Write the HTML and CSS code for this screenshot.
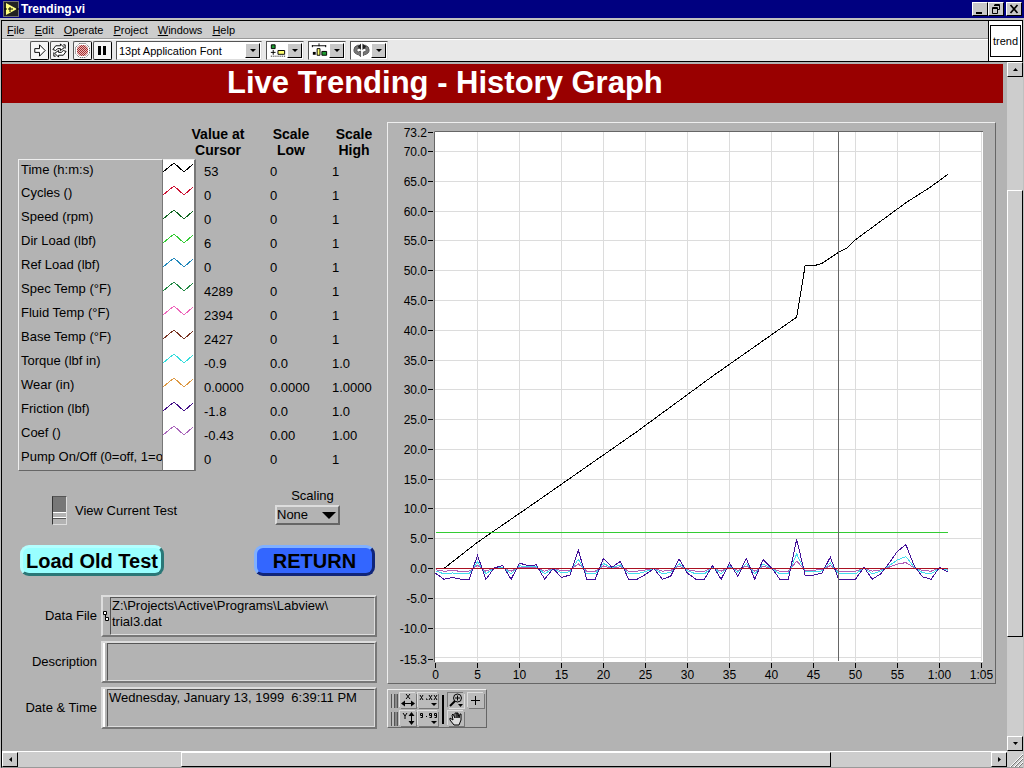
FILE: index.html
```html
<!DOCTYPE html>
<html lang="en">
<head>
<meta charset="utf-8">
<title>Trending.vi</title>
<link rel="stylesheet" href="styles.css">
</head>
<body>
<div class="window">
  <header class="titlebar">
    <svg class="app-icon" width="16" height="16" viewBox="0 0 16 16" aria-hidden="true">
      <rect width="16" height="16" fill="#222"/><rect x=".5" y=".5" width="15" height="15" fill="none" stroke="#c0c0c0" stroke-dasharray="1 1"/>
      <path d="M3 2L14 8L3 14Z" fill="#ffff80"/><path d="M1 8h3M5 8h5M7 6v5M13 8h3" stroke="#000" fill="none"/>
    </svg>
    <h1 class="caption">Trending.vi</h1>
    <div class="win-buttons">
      <button class="win-btn" aria-label="Minimize"><svg width="14" height="12" viewBox="0 0 14 12"><path d="M3 9h6v2H3z"/></svg></button>
      <button class="win-btn" aria-label="Restore"><svg width="14" height="12" viewBox="0 0 14 12"><path d="M5.500 1.500h5v5h-2M5 2.500h6M3.500 4.500h5v6h-5zM3 5.500h6" fill="none" stroke="#000"/></svg></button>
      <button class="win-btn win-close" aria-label="Close"><svg width="14" height="12" viewBox="0 0 14 12"><path d="M3.500 2l7 8M10.500 2l-7 8" fill="none" stroke="#000" stroke-width="1.700"/></svg></button>
    </div>
  </header>

  <div class="chrome">
    <div class="bars">
      <nav class="menubar">
        <a href="#"><u>F</u>ile</a><a href="#"><u>E</u>dit</a><a href="#"><u>O</u>perate</a><a href="#"><u>P</u>roject</a><a href="#"><u>W</u>indows</a><a href="#"><u>H</u>elp</a>
      </nav>
      <div class="toolbar">
        <div class="pair">
          <button class="tool" aria-label="Run"><svg width="17" height="17" viewBox="0 0 18 18"><path d="M4 7h5V3l6 6-6 6v-4H4z" fill="#fff" stroke="#000"/></svg></button>
          <button class="tool" aria-label="Run continuously"><svg width="17" height="17" viewBox="0 0 18 18"><path d="M2 8l3-4h5V2l4 4-4 3V7H7L5 9zM16 10l-3 4H8v2l-4-4 4-3v2h3l2-2z" fill="#fff" stroke="#000"/><path d="M13 3h2v4M5 15H3v-4" fill="none" stroke="#000"/></svg></button>
        </div>
        <div class="pair">
          <button class="tool" aria-label="Abort"><svg width="17" height="17" viewBox="0 0 17 17"><defs><pattern id="dots" width="2" height="2" patternUnits="userSpaceOnUse"><rect width="2" height="2" fill="#e7b9b9"/><path d="M0 0h1v1H0zM1 1h1v1H1z" fill="#a52c2c"/></pattern></defs><path d="M5.500 1.500h6l4 4v6l-4 4h-6l-4-4v-6z" fill="#fff" stroke="#555" stroke-dasharray="1 1"/><path d="M6 3h5l3 3v5l-3 3H6l-3-3V6z" fill="url(#dots)"/></svg></button>
          <button class="tool" aria-label="Pause"><svg width="17" height="17" viewBox="0 0 17 17"><path d="M4 4h3v9H4zM9 4h3v9H9z"/></svg></button>
        </div>
        <div class="combo combo-font"><select aria-label="Font"><option>13pt Application Font</option></select><span class="drop"></span></div>
        <button class="combo combo-icon" aria-label="Align objects"><svg width="20" height="15" viewBox="0 0 20 15"><path d="M3.500 1.500h4v4h-4z" fill="#1c9c30" stroke="#000"/><path d="M10.500 7.500h7v4h-7z" fill="#ffff70" stroke="#000"/><path d="M3 9.500h5M5.500 7v5" stroke="#000"/><path d="M3 13.500h16" stroke="#000" stroke-dasharray="1 1"/></svg><span class="drop"></span></button>
        <button class="combo combo-icon" aria-label="Distribute objects"><svg width="20" height="15" viewBox="0 0 20 15"><path d="M2 2.500h15M2.500 2v2M9.500 0v3M16.500 2v2" stroke="#000"/><path d="M3 9h3v3H3z"/><path d="M7.500 5.500h3v7h-3z" fill="#ffff70" stroke="#000"/><path d="M12.500 8.500h5v4h-5z" fill="#1c9c30" stroke="#000"/></svg><span class="drop"></span></button>
        <button class="combo combo-icon" aria-label="Reorder objects"><svg width="20" height="15" viewBox="0 0 20 15"><path d="M8 2H6Q2 3 2 7q0 4 5 5l2 2v-6l-2 1Q5 9 5 7q0-2 3-2zM12 2h2q4 1 4 5 0 4-5 5l-1 1v-4q3 0 3-2t-3-2z" fill="#777" stroke="#555"/><path d="M9.500 0v7L6 3.500zM11 0v7l4-3.500z" fill="#222"/></svg><span class="drop"></span></button>
      </div>
    </div>
    <div class="vi-icon"><span>trend</span></div>
  </div>

  <div class="viewport">
    <main class="panel">
      <h2 class="banner">Live Trending - History Graph</h2>
      <div class="content">
        <section class="left">
          <table class="legend">
            <colgroup><col class="c-name"><col class="c-plot"><col class="c-value"><col class="c-low"><col class="c-high"></colgroup>
            <thead><tr><td colspan="2"></td><th class="h-value" scope="col"><span>Value at<br>Cursor</span></th><th scope="col">Scale<br>Low</th><th scope="col">Scale<br>High</th></tr></thead>
            <tbody id="legend-rows"></tbody>
          </table>

          <div class="options">
            <label class="switch-label"><input type="checkbox" class="switch">View Current Test</label>
            <div class="scaling">
              <label for="scaling">Scaling</label>
              <div class="ring"><select id="scaling"><option>None</option></select></div>
            </div>
          </div>

          <div class="actions">
            <button class="action load">Load Old Test</button>
            <button class="action return">RETURN</button>
          </div>

          <div class="fields">
            <label for="data-file">Data File</label>
            <div class="field"><span class="path-handle"><svg width="7" height="12" viewBox="0 0 7 12"><path d="M.5 1.500h3v3h-3zM2.500 7.500h3v3h-3zM2.500 4v3.500" fill="#fff" stroke="#000"/></svg></span><textarea id="data-file" readonly>Z:\Projects\Active\Programs\Labview\
trial3.dat</textarea></div>
            <label for="description">Description</label>
            <div class="field"><span class="bar-handle"></span><textarea id="description"></textarea></div>
            <label for="date-time">Date &amp; Time</label>
            <div class="field"><span class="bar-handle"></span><textarea id="date-time" readonly>Wednesday, January 13, 1999  6:39:11 PM</textarea></div>
          </div>
        </section>

        <section class="right">
          <div class="graph"><svg id="graph" viewBox="388 123 607 560" role="img" aria-label="History graph"></svg></div>
          <div class="palette">
            <div class="pal-scale">
              <span class="lock"></span>
              <button class="pal" aria-label="Autoscale X"><svg width="16" height="15" viewBox="0 0 16 15"><path d="M6 1l4 5M10 1L6 6M2 10.500h12" stroke="#000" fill="none"/><path d="M1 10.500l4-3v6zM15 10.500l-4-3v6z"/></svg></button>
              <button class="pal" aria-label="X format"><svg width="20" height="15" viewBox="0 0 20 15"><path d="M2 2l3 5M5 2L2 7M11 2l3 5M14 2l-3 5M16 2l3 5M19 2l-3 5M8 6h1v1" stroke="#000" fill="none"/><path d="M13 10h6l-3 3z"/></svg></button>
              <span class="lock"></span>
              <button class="pal" aria-label="Autoscale Y"><svg width="16" height="15" viewBox="0 0 16 15"><path d="M3 2l2 3 2-3M5 5v3M11.500 3v9" stroke="#000" fill="none"/><path d="M11.500 1l3 4h-6zM11.500 14l3-4h-6z"/></svg></button>
              <button class="pal" aria-label="Y format"><svg width="20" height="15" viewBox="0 0 20 15"><path d="M4.500 4.500h-2v-2h2v4h-2M13.500 4.500h-2v-2h2v4h-2M18.500 4.500h-2v-2h2v4h-2M8 5.500h1" stroke="#000" fill="none"/><path d="M13 10h6l-3 3z"/></svg></button>
            </div>
            <span class="pal-divider"></span>
            <div class="pal-tools">
              <button class="pal down" aria-label="Zoom"><svg width="16" height="15" viewBox="0 0 16 15"><circle cx="9.500" cy="5" r="4" fill="none" stroke="#000"/><path d="M7 5h5M9.500 2.500v5" stroke="#000"/><path d="M7 8l-5 5" stroke="#000" stroke-width="2"/><path d="M10 11h5l-2.500 3z"/></svg></button>
              <button class="pal" aria-label="Cursor"><svg width="16" height="15" viewBox="0 0 16 15"><path d="M3 7.500h9M7.500 3v9" stroke="#000"/></svg></button>
              <button class="pal" aria-label="Pan"><svg width="16" height="15" viewBox="0 0 16 15"><path d="M6 14L2 9V7l3 2-1-5 1-1 2 4V2h2v5V2h1l1 5 1-4h1v6l-2 5z" fill="#ddd" stroke="#000"/></svg></button>
            </div>
          </div>
        </section>
      </div>
    </main>
    <div class="vscroll">
      <button class="sb-btn" aria-label="Scroll up"><svg width="5" height="3" viewBox="0 0 5 3"><path d="M0 3h5L2.500 0z"/></svg></button>
      <div class="track"><div class="v-thumb"></div></div>
      <button class="sb-btn" aria-label="Scroll down"><svg width="5" height="3" viewBox="0 0 5 3"><path d="M0 0h5L2.500 3z"/></svg></button>
    </div>
    <div class="hscroll">
      <button class="sb-btn" aria-label="Scroll left"><svg width="3" height="5" viewBox="0 0 3 5"><path d="M3 0v5L0 2.500z"/></svg></button>
      <div class="track"><div class="h-thumb"></div></div>
      <button class="sb-btn" aria-label="Scroll right"><svg width="3" height="5" viewBox="0 0 3 5"><path d="M0 0v5l3-2.500z"/></svg></button>
    </div>
    <div class="grip"><svg width="14" height="14" viewBox="0 0 14 14"><path d="M1 14L14 1M5 14l9-9M9 14l5-5" stroke="#fff"/><path d="M2 14L14 2M6 14l8-8M10 14l4-4" stroke="#777"/></svg></div>
  </div>
</div>
<script src="trend.js"></script>
</body>
</html>
```

FILE: styles.css
```css
* { box-sizing: border-box; }
body { margin: 0; font: 13px/16px "Liberation Sans", Arial, sans-serif; color: #000; background: #c0c0c0; }
button, select, textarea { font: inherit; color: inherit; border-radius: 0; margin: 0; }
button { padding: 0; cursor: pointer; }
svg { display: block; }
h1, h2 { margin: 0; }

.window { display: flex; flex-direction: column; min-height: 100vh; padding: 0 1px; }
.titlebar { display: flex; align-items: center; height: 18px; margin: 0 -1px; padding: 0 2px 0 3px; background: #000080; color: #fff; }
.caption { font-size: 12px; line-height: 16px; padding-left: 2px; flex: 1; }
.win-buttons { display: flex; }
.win-btn { width: 16px; height: 14px; background: #c8c8c8; border: 1px solid; border-color: #fff #000 #000 #fff; overflow: hidden; }
.win-close { margin-left: 2px; }

.chrome { display: flex; height: 42px; margin-top: 2px; border: 1px solid #000; }
.bars { flex: 1; min-width: 0; }
.menubar { display: flex; gap: 10px; height: 18px; padding: 1px 5px; background: #cdcdcd; font-size: 11px; border-bottom: 1px solid #999; }
.menubar a { color: #000; text-decoration: none; }
.toolbar { display: flex; gap: 4px; height: 22px; padding: 1px 0 1px 28px; background: #e8e8e8; border-top: 1px solid #fff; }
.pair { display: flex; gap: 1px; }
.tool { width: 19px; height: 19px; background: #f4f4f4; border: 1px solid; border-color: #555 #000 #000 #555; border-radius: 2px; overflow: hidden; }
.combo { display: flex; height: 19px; background: #fff; border: 1px solid; border-color: #555 #ddd #ddd #555; padding: 1px; align-items: stretch; }
.combo-font { width: 146px; }
.combo-font select { flex: 1; min-width: 0; border: 0; background: none; appearance: none; font-size: 11px; padding: 0 1px; outline: 0; }
.combo-icon { width: 38px; justify-content: space-between; }
.drop { width: 15px; flex: none; background: #c8c8c8; border: 1px solid; border-color: #fff #000 #000 #fff; display: grid; place-items: center; }
.drop::after { content: ""; border: 3px solid transparent; border-top-color: #000; border-bottom: 0; }
.vi-icon { width: 34px; background: #fff; border-left: 1px solid #000; padding: 4px 1px; }
.vi-icon span { display: grid; place-items: center; height: 32px; border: 1px solid #000; font-size: 11px; }

.viewport { flex: 1; display: grid; grid-template-columns: minmax(0, 1fr) 16px; grid-template-rows: 1fr 16px; border-left: 1px solid #000; border-bottom: 1px solid #999; }
.panel { background: #b3b3b3; padding-top: 2px; }
.banner { margin-right: 4px; padding-left: 225px; height: 39px; background: #990000; color: #fff; font-size: 31px; line-height: 38px; white-space: nowrap; }
.content { display: grid; grid-template-columns: minmax(0, 366fr) minmax(0, 609fr); gap: 3px; padding: 19px 11px 16px 16px; }

.legend { width: 100%; border-collapse: separate; border-spacing: 0; table-layout: fixed; }
.c-name { width: 144px; }
.c-plot { width: 34px; }
.c-value { width: 62px; }
.c-low { width: 66px; }
.legend thead td, .legend th { height: 37px; padding: 4px 0 0; font-size: 14px; line-height: 16px; vertical-align: top; white-space: nowrap; }
.h-value span { display: block; margin: 0 12px 0 -6px; }
.legend tbody td, .legend tbody th { height: 24px; padding: 0; white-space: nowrap; line-height: 16px; }
.legend tbody th { font-weight: normal; font-size: 13px; text-align: left; overflow: hidden; padding: 2px 2px 0; border-left: 1px solid #eee; }
.legend tbody tr:first-child th, .legend tbody tr:first-child .plot { border-top: 1px solid #eee; }
.legend tbody tr:last-child th, .legend tbody tr:last-child .plot { border-bottom: 1px solid #666; }
.legend tbody .plot { background: #fff; border-left: 1px solid #777; border-right: 2px solid #777; vertical-align: top; }
.legend tbody .num { padding: 1px 0 0 8px; }
.legend tbody .low { padding-left: 12px; }

.options { display: flex; justify-content: space-between; padding: 16px 44px 0 34px; }
.switch-label { display: flex; align-items: center; gap: 8px; height: 29px; margin-top: 9px; font-size: 13px; }
.switch { appearance: none; margin: 0; width: 15px; height: 29px; border: 1px solid; border-color: #555 #ddd #ddd #333; background: linear-gradient(#777 0 15px, #fff 15px 16px, #b3b3b3 16px 20px, #fff 20px 21px, #555 21px 22px, #b3b3b3 22px); }
.scaling { text-align: center; width: 66px; padding-left: 1px; }
.scaling label { display: block; padding-left: 10px; line-height: 18px; }
.ring { display: flex; align-items: center; height: 20px; border: 2px solid; border-color: #ddd #666 #666 #ddd; padding-right: 2px; }
.ring select { flex: 1; min-width: 0; border: 0; padding: 0; background: none; appearance: none; outline: 0; }
.ring::after { content: ""; border: 7px solid transparent; border-top-color: #000; border-bottom: 0; }

.actions { display: flex; justify-content: space-between; padding: 20px 9px 0 2px; }
.action { height: 31px; border: 3px solid; border-radius: 9px; font-size: 20px; font-weight: bold; line-height: 22px; white-space: nowrap; }
.load { width: 144px; background: #99ffff; border-color: #b4ffff #2a7777 #2a7777 #b4ffff; }
.return { width: 121px; background: #3366ff; border-color: #80b0ff #10257a #10257a #80b0ff; }

.fields { display: grid; grid-template-columns: 79px minmax(0, 1fr); column-gap: 4px; row-gap: 4px; align-items: center; padding: 19px 7px 0 0; }
.fields label { text-align: right; white-space: nowrap; }
.field { display: flex; height: 42px; border: 2px solid; border-color: #ddd #777 #777 #ddd; }
.field textarea { flex: 1; min-width: 0; height: 100%; resize: none; overflow: hidden; background: none; border: 1px solid; border-color: #555 #ddd #ddd #555; padding: 0 1px; line-height: 16px; outline: 0; white-space: pre-wrap; }
.path-handle { width: 7px; display: grid; place-items: center; }
.bar-handle { width: 2px; margin-right: 2px; background: #fff; }

.graph { border: 1px solid; border-color: #eee #666 #666 #eee; }
.graph svg { width: 100%; height: auto; }
.graph text { font-size: 12px; }
.y-text { text-anchor: end; }
.x-text { text-anchor: middle; }
.grid { stroke: #dcdcdc; }
.tick { stroke: #000; }
.cursor { stroke: #666; }
.trace { fill: none; shape-rendering: crispEdges; }

.palette { display: inline-flex; align-items: center; gap: 4px; margin-top: 5px; height: 39px; padding: 1px 2px 0 3px; border: 1px solid; border-color: #eee #666 #666 #eee; }
.pal-scale { display: grid; grid-template-columns: 7px 16px 20px; gap: 3px 2px; }
.pal-tools { display: grid; grid-template-columns: 16px 16px; gap: 3px 4px; }
.pal { height: 15px; border: 0; background: #bbb; box-shadow: 1px 1px 0 #777, -1px -1px 0 #ddd; }
.down { box-shadow: 1px 1px 0 #ddd, -1px -1px 0 #777; }
.lock { background: linear-gradient(90deg, #555 0 1px, #bbb 1px 3px, #555 3px 4px, #888 4px 6px, #555 6px); margin-top: 1px; }
.pal-divider { width: 2px; height: 29px; background: #000; }

.vscroll { display: flex; flex-direction: column; background: #cdcdcd; }
.hscroll { display: flex; background: #cdcdcd; border-top: 1px solid #fff; }
.sb-btn { width: 16px; height: 15px; flex: none; background: #c8c8c8; border: 1px solid; border-color: #fff #000 #000 #fff; display: grid; place-items: center; }
.track { flex: 1; display: flex; }
.vscroll .track { flex-direction: column; padding: 113px 0 99px; }
.v-thumb { flex: 1; border: 1px solid; border-color: #fff #000 #000 #fff; }
.hscroll .track { padding: 0 160px 0 163px; }
.h-thumb { flex: 1; border: 1px solid; border-color: #fff #000 #000 #fff; }
.grip { background: #cdcdcd; display: grid; place-items: end; }
```

FILE: trend.js
```js
const NS = "http://www.w3.org/2000/svg";

const rows = [
  ["Time (h:m:s)", "#000000", "53", "0", "1"],
  ["Cycles ()", "#cc1133", "0", "0", "1"],
  ["Speed (rpm)", "#116622", "0", "0", "1"],
  ["Dir Load (lbf)", "#33cc33", "6", "0", "1"],
  ["Ref Load (lbf)", "#2288bb", "0", "0", "1"],
  ["Spec Temp (°F)", "#228844", "4289", "0", "1"],
  ["Fluid Temp (°F)", "#ee66bb", "2394", "0", "1"],
  ["Base Temp (°F)", "#773322", "2427", "0", "1"],
  ["Torque (lbf in)", "#33dddd", "-0.9", "0.0", "1.0"],
  ["Wear (in)", "#dd9944", "0.0000", "0.0000", "1.0000"],
  ["Friction (lbf)", "#441188", "-1.8", "0.0", "1.0"],
  ["Coef ()", "#aa66bb", "-0.43", "0.00", "1.00"],
  ["Pump On/Off (0=off, 1=o", null, "0", "0", "1"]
];

document.getElementById("legend-rows").innerHTML = rows.map(([name, color, value, low, high]) => {
  const line = color
    ? `<svg width="31" height="22" viewBox="0 0 31 22"><path d="M0 12L11 3L21 12L30 4" fill="none" stroke="${color}" shape-rendering="crispEdges"/></svg>`
    : "";
  return `<tr><th scope="row">${name}</th><td class="plot">${line}</td>` +
    `<td class="num">${value}</td><td class="num low">${low}</td><td class="num">${high}</td></tr>`;
}).join("");

const graph = document.getElementById("graph");
const px = t => 435.5 + t * 8.4;
const py = v => 568.5 - v * 5.957;

function add(tag, attrs, text) {
  const el = document.createElementNS(NS, tag);
  for (const key in attrs) el.setAttribute(key, attrs[key]);
  if (text) el.textContent = text;
  graph.appendChild(el);
}
function line(x1, y1, x2, y2, cls) { add("path", { d: `M${x1} ${y1}L${x2} ${y2}`, class: cls }); }
function trace(points, color) {
  add("polyline", { points: points.map(([t, v]) => `${px(t)},${py(v)}`).join(" "), class: "trace", stroke: color });
}
const snap = n => Math.floor(n) + 0.5;

add("rect", { x: 434, y: 131, width: 549, height: 531, fill: "#fff" });
for (let v = -15; v <= 70; v += 5) line(435, snap(py(v)), 982, snap(py(v)), "grid");
for (let t = 5; t <= 65; t += 5) line(snap(px(t)), 132, snap(px(t)), 661, "grid");
add("path", { d: "M434.500 662V131.500H983", stroke: "#666", fill: "none" });

const yTicks = [73.2, -15.3];
for (let v = -10; v <= 70; v += 5) yTicks.push(v);
yTicks.forEach(v => {
  const y = snap(py(v));
  line(428, y, 433, y, "tick");
  add("text", { x: 427, y: y + 4.5, class: "y-text" }, v.toFixed(1));
});
for (let t = 0; t <= 65; t += 5) {
  const x = snap(px(t));
  line(x, 663, x, 668, "tick");
  add("text", { x, y: 679, class: "x-text" }, t < 60 ? String(t) : "1:" + String(t - 60).padStart(2, "0"));
}

const friction = [-0.8, -1.8, -1.5, -1.8, -1.8, 2.2, -1.8, 0.1, 0.5, -1.8, 0.9, 0.5, 0.6, -1.8, 0, -1.5, -1.1, 3.1,
  -1.8, -1.8, 1.7, 0.2, 1.2, -1.8, -1.8, -1, 0, -1.8, -1.3, 1.6, -0.8, -1.8, -1.8, 0.5, -1.8, 0.9, -1.3, 1.7, -1.8,
  1.5, 0.1, -1.8, -1.8, 4.9, -1.1, -1.1, -0.8, 1.9, -1.8, -1.8, -1.8, 0.2, -1.8, -0.9, 0.9, 2.9, 4, 0.4, -1.4, -1.8,
  0.2, -0.6];
const scaled = k => friction.map((v, t) => [t, v * k]);

trace([[0, 0], [1, 0], [5, 4.4], [12, 11.2], [24, 23], [33, 32.3], [43, 42.2], [44, 50.8], [45, 50.8], [46, 51.2],
  [48, 53.1], [49, 53.8], [50, 55.2], [56, 61.4], [59, 64.1], [61, 66.2]], "#000");
trace([[0, 6], [61, 6]], "#33cc33");
trace(scaled(0.25), "#b060b8");
trace(scaled(0.5), "#44ddee");
trace(scaled(1), "#441199");
trace([[0, 0], [61, 0]], "#aa1122");
line(838.5, 132, 838.5, 661, "cursor");
```
